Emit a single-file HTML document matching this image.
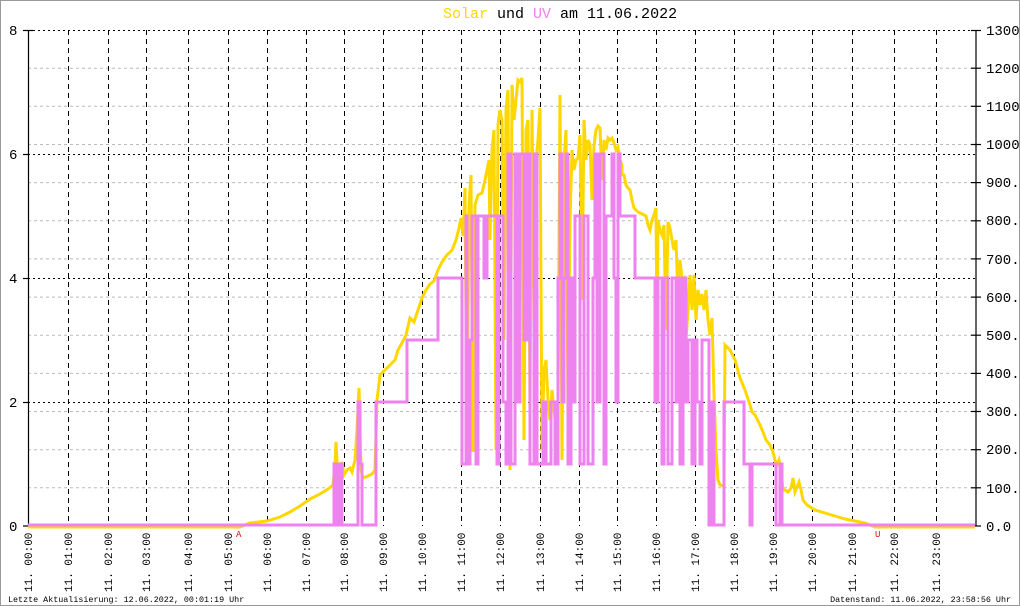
<!DOCTYPE html>
<html><head><meta charset="utf-8"><style>
html,body{margin:0;padding:0;background:#fff}
svg{display:block}
text{font-family:"Liberation Mono",monospace}
</style></head><body>
<svg width="1020" height="606" viewBox="0 0 1020 606" xmlns="http://www.w3.org/2000/svg">
<rect x="0.5" y="0.5" width="1019" height="605" fill="#fff" stroke="#999"/>
<text x="443" y="18" font-size="15"><tspan fill="#FFD700">Solar</tspan><tspan fill="#000"> und </tspan><tspan fill="#EE82EE">UV</tspan><tspan fill="#000"> am 11.06.2022</tspan></text>
<g stroke="#bbb" stroke-width="1" stroke-dasharray="3,3">
<line x1="28" y1="68.2" x2="976" y2="68.2"/><line x1="28" y1="106.3" x2="976" y2="106.3"/>
<line x1="28" y1="144.5" x2="976" y2="144.5"/><line x1="28" y1="182.6" x2="976" y2="182.6"/>
<line x1="28" y1="220.8" x2="976" y2="220.8"/><line x1="28" y1="258.9" x2="976" y2="258.9"/>
<line x1="28" y1="297.1" x2="976" y2="297.1"/><line x1="28" y1="335.2" x2="976" y2="335.2"/>
<line x1="28" y1="373.4" x2="976" y2="373.4"/><line x1="28" y1="411.5" x2="976" y2="411.5"/>
<line x1="28" y1="449.7" x2="976" y2="449.7"/><line x1="28" y1="487.8" x2="976" y2="487.8"/>
</g>
<g stroke="#000" stroke-width="1" stroke-dasharray="2,3">
<line x1="28" y1="30.5" x2="976" y2="30.5"/><line x1="28" y1="154.5" x2="976" y2="154.5"/>
<line x1="28" y1="278.5" x2="976" y2="278.5"/><line x1="28" y1="402.5" x2="976" y2="402.5"/>
</g>
<g stroke="#000" stroke-width="1" stroke-dasharray="5,4">
<line x1="68.5" y1="30" x2="68.5" y2="526"/><line x1="108.5" y1="30" x2="108.5" y2="526"/>
<line x1="146.5" y1="30" x2="146.5" y2="526"/><line x1="188.5" y1="30" x2="188.5" y2="526"/>
<line x1="228.5" y1="30" x2="228.5" y2="526"/><line x1="267.5" y1="30" x2="267.5" y2="526"/>
<line x1="306.5" y1="30" x2="306.5" y2="526"/><line x1="344.5" y1="30" x2="344.5" y2="526"/>
<line x1="383.5" y1="30" x2="383.5" y2="526"/><line x1="422.5" y1="30" x2="422.5" y2="526"/>
<line x1="461.5" y1="30" x2="461.5" y2="526"/><line x1="500.5" y1="30" x2="500.5" y2="526"/>
<line x1="540.5" y1="30" x2="540.5" y2="526"/><line x1="579.5" y1="30" x2="579.5" y2="526"/>
<line x1="617.5" y1="30" x2="617.5" y2="526"/><line x1="656.5" y1="30" x2="656.5" y2="526"/>
<line x1="695.5" y1="30" x2="695.5" y2="526"/><line x1="734.5" y1="30" x2="734.5" y2="526"/>
<line x1="773.5" y1="30" x2="773.5" y2="526"/><line x1="812.5" y1="30" x2="812.5" y2="526"/>
<line x1="852.5" y1="30" x2="852.5" y2="526"/><line x1="894.5" y1="30" x2="894.5" y2="526"/>
<line x1="936.5" y1="30" x2="936.5" y2="526"/>
</g>
<g stroke="#000" stroke-width="1.2">
<line x1="28.5" y1="30" x2="28.5" y2="526"/>
<line x1="976" y1="30" x2="976" y2="526"/>
<line x1="23" y1="30.5" x2="33" y2="30.5"/><line x1="23" y1="154.5" x2="28" y2="154.5"/><line x1="23" y1="278.5" x2="28" y2="278.5"/><line x1="23" y1="402.5" x2="28" y2="402.5"/><line x1="23" y1="526" x2="28" y2="526"/>
<line x1="971" y1="30.5" x2="981" y2="30.5"/><line x1="971" y1="68.2" x2="981" y2="68.2"/><line x1="971" y1="106.3" x2="981" y2="106.3"/><line x1="971" y1="144.5" x2="981" y2="144.5"/><line x1="971" y1="182.6" x2="981" y2="182.6"/><line x1="971" y1="220.8" x2="981" y2="220.8"/><line x1="971" y1="258.9" x2="981" y2="258.9"/><line x1="971" y1="297.1" x2="981" y2="297.1"/><line x1="971" y1="335.2" x2="981" y2="335.2"/><line x1="971" y1="373.4" x2="981" y2="373.4"/><line x1="971" y1="411.5" x2="981" y2="411.5"/><line x1="971" y1="449.7" x2="981" y2="449.7"/><line x1="971" y1="487.8" x2="981" y2="487.8"/><line x1="971" y1="526" x2="981" y2="526"/>
</g>
<g font-family="Liberation Sans,sans-serif" font-size="14" fill="#000" style="font-family:'Liberation Sans',sans-serif">
<text x="9" y="35">8</text><text x="9" y="159">6</text><text x="9" y="283">4</text><text x="9" y="407">2</text><text x="9" y="531">0</text>
<text x="986" y="35">1300.0</text><text x="986" y="73">1200.0</text><text x="986" y="111">1100.0</text><text x="986" y="149">1000.0</text><text x="986" y="187">900.0</text><text x="986" y="225">800.0</text><text x="986" y="264">700.0</text><text x="986" y="302">600.0</text><text x="986" y="340">500.0</text><text x="986" y="378">400.0</text><text x="986" y="416">300.0</text><text x="986" y="454">200.0</text><text x="986" y="493">100.0</text><text x="986" y="531">0.0</text>
</g>
<polyline fill="none" stroke="#FFD700" stroke-width="3" stroke-linejoin="miter" points="28,527 240,527 250,523 267,521 280,517 290,512 300,506 310,499 320,494 328,489 333,485 335,465 336,442 338,480 340,470 342,462 344,475 347,470 350,468 352,472 355,460 357,430 359,388 361,470 363,478 368,476 372,474 375,470 377,400 380,375 385,370 390,365 395,360 398,350 402,343 406,335 410,318 414,322 418,310 422,298 426,290 430,284 434,281 438,270 442,262 447,255 452,250 456,240 459,228 461,218 463,236 465,188 467,450 469,205 471,175 473,452 475,205 478,195 482,193 485,180 487,170 489,160 490,240 492,150 494,130 496,450 498,125 500,110 502,120 504,340 506,110 508,90 510,470 512,85 514,120 516,100 518,80 520,82 522,78 524,440 526,130 528,120 530,410 532,110 534,300 536,160 538,140 540,108 542,450 544,370 546,360 548,400 550,420 552,390 554,410 556,430 558,400 560,95 562,460 564,160 566,130 568,420 570,220 572,150 574,170 576,160 578,158 580,135 582,300 584,120 586,160 588,140 590,145 592,200 594,146 596,130 598,126 600,128 602,180 604,140 606,150 608,138 610,140 612,138 614,143 616,150 618,147 620,160 622,165 622,175 624,175 626,185 628,188 630,190 632,200 634,208 638,212 642,214 646,216 648,225 650,230 652,220 654,215 656,208 657,330 658,220 660,230 662,235 664,225 666,330 668,222 670,228 672,240 674,250 676,240 678,300 680,260 682,280 684,278 686,340 688,310 690,275 692,310 694,275 696,320 698,290 700,305 702,294 704,310 706,290 708,320 710,335 712,318 714,395 716,450 718,480 720,485 724,486 725,345 730,350 735,360 740,378 745,390 750,405 752,412 755,415 760,425 763,432 766,440 770,445 773,452 775,460 777,465 779,460 781,470 783,490 785,490 788,492 791,488 793,478 795,492 797,487 799,482 801,490 803,500 807,505 815,510 825,513 835,516 845,519 855,521 865,523 875,527 975,527"/>
<polyline fill="none" stroke="#EE82EE" stroke-width="3" stroke-linejoin="miter" points="28,525 334,525 334,464 337,464 337,525 340,525 340,464 342,464 342,525 358,525 358,402 360,402 360,464 362,464 362,525 376,525 376,402 407,402 407,340 438,340 438,278 462,278 462,464 466,464 466,216 467,216 467,464 470,464 470,340 472,340 472,216 476,216 476,464 478,464 478,216 484,216 484,278 487,278 487,216 497,216 497,464 499,464 499,216 503,216 503,402 506,402 506,464 508,464 508,154 511,154 511,464 515,464 515,154 518,154 518,402 520,402 520,154 524,154 524,340 527,340 527,154 530,154 530,464 534,464 534,154 537,154 537,464 543,464 543,402 546,402 546,464 551,464 551,402 555,402 555,464 558,464 558,278 560,278 560,154 562,154 562,402 564,402 564,278 566,278 566,154 568,154 568,464 571,464 571,278 573,278 573,402 575,402 575,216 580,216 580,464 584,464 584,216 588,216 588,464 593,464 593,278 595,278 595,154 597,154 597,402 600,402 600,154 604,154 604,464 606,464 606,216 612,216 612,154 614,154 614,278 616,278 616,402 618,402 618,154 620,154 620,216 635,216 635,278 655,278 655,402 658,402 658,278 662,278 662,464 664,464 664,278 668,278 668,464 672,464 672,278 676,278 676,402 678,402 678,278 680,278 680,464 683,464 683,278 686,278 686,402 688,402 688,340 692,340 692,464 695,464 695,340 697,340 697,402 700,402 700,464 702,464 702,340 709,340 709,525 712,525 712,402 714,402 714,525 724,525 724,402 744,402 744,464 750,464 750,525 752,525 752,464 776,464 776,525 780,525 780,464 782,464 782,525 975,525"/>
<text x="236" y="537" font-size="9" fill="#e00">A</text>
<text x="875" y="537" font-size="9" fill="#e00">U</text>
<g font-size="11" fill="#000">
<text transform="translate(32,592) rotate(-90)">11. 00:00</text>
<text transform="translate(72,592) rotate(-90)">11. 01:00</text>
<text transform="translate(112,592) rotate(-90)">11. 02:00</text>
<text transform="translate(150,592) rotate(-90)">11. 03:00</text>
<text transform="translate(192,592) rotate(-90)">11. 04:00</text>
<text transform="translate(232,592) rotate(-90)">11. 05:00</text>
<text transform="translate(271,592) rotate(-90)">11. 06:00</text>
<text transform="translate(310,592) rotate(-90)">11. 07:00</text>
<text transform="translate(348,592) rotate(-90)">11. 08:00</text>
<text transform="translate(387,592) rotate(-90)">11. 09:00</text>
<text transform="translate(426,592) rotate(-90)">11. 10:00</text>
<text transform="translate(465,592) rotate(-90)">11. 11:00</text>
<text transform="translate(504,592) rotate(-90)">11. 12:00</text>
<text transform="translate(544,592) rotate(-90)">11. 13:00</text>
<text transform="translate(583,592) rotate(-90)">11. 14:00</text>
<text transform="translate(621,592) rotate(-90)">11. 15:00</text>
<text transform="translate(660,592) rotate(-90)">11. 16:00</text>
<text transform="translate(699,592) rotate(-90)">11. 17:00</text>
<text transform="translate(738,592) rotate(-90)">11. 18:00</text>
<text transform="translate(777,592) rotate(-90)">11. 19:00</text>
<text transform="translate(816,592) rotate(-90)">11. 20:00</text>
<text transform="translate(856,592) rotate(-90)">11. 21:00</text>
<text transform="translate(898,592) rotate(-90)">11. 22:00</text>
<text transform="translate(940,592) rotate(-90)">11. 23:00</text>
</g>
<text x="8" y="602" font-size="8.4" fill="#000">Letzte Aktualisierung: 12.06.2022, 00:01:19 Uhr</text>
<text x="1011" y="602" font-size="8.4" fill="#000" text-anchor="end">Datenstand: 11.06.2022, 23:58:56 Uhr</text>
</svg>
</body></html>
